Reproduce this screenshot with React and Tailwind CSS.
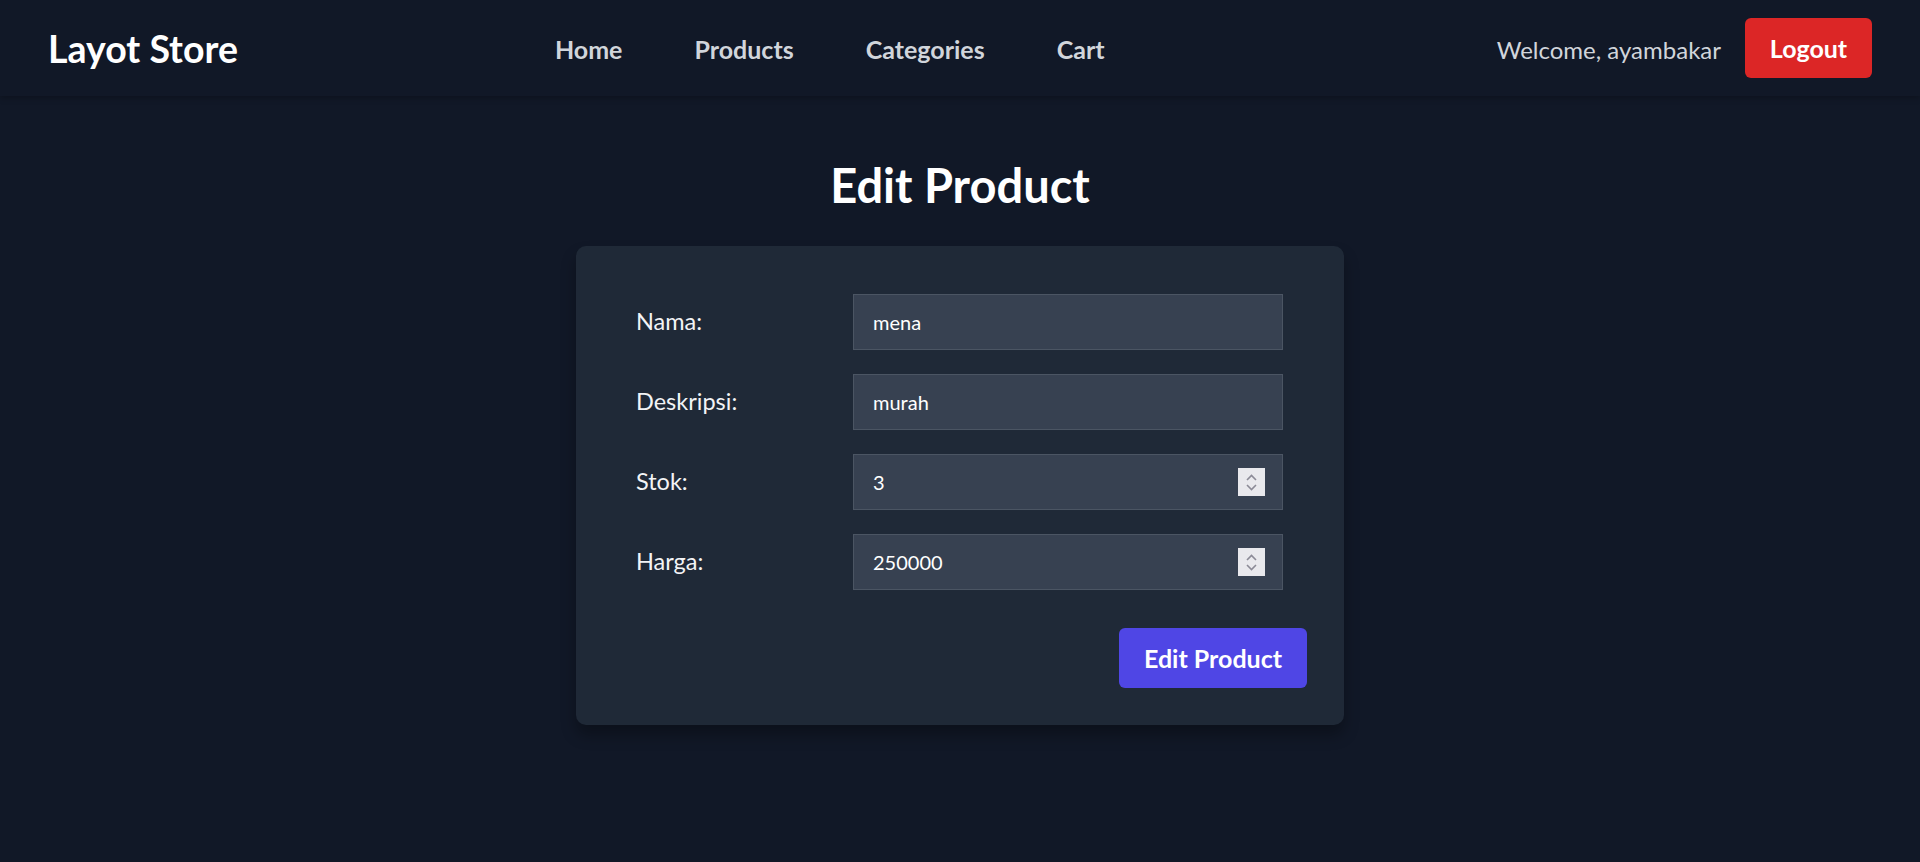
import React from "react";

const font = { fontFamily: "Lato, 'Open Sans', 'Noto Sans', sans-serif" };

function Spinner() {
  return (
    <div className="flex h-[28px] w-[27px] flex-col items-center justify-center gap-[3px] bg-[#e9e9ed]">
      <svg width="11" height="7" viewBox="0 0 11 7" fill="none">
        <path d="M1 6L5.5 1.5L10 6" stroke="#8b8a96" strokeWidth="1.6" />
      </svg>
      <svg width="11" height="7" viewBox="0 0 11 7" fill="none">
        <path d="M1 1L5.5 5.5L10 1" stroke="#8b8a96" strokeWidth="1.6" />
      </svg>
    </div>
  );
}

function Field({ label, value, number }) {
  return (
    <div className="flex items-center">
      <label className="w-[217px] text-[23.5px] text-[#f3f4f6]">{label}</label>
      <div className="flex h-[56px] w-[430px] items-center justify-between border border-[#4b5563] bg-[#374151] pl-[19px] pr-[17px]">
        <span className="text-[20px] text-white">{value}</span>
        {number && <Spinner />}
      </div>
    </div>
  );
}

export default function App() {
  return (
    <div className="min-h-[862px] bg-[#111827]" style={font}>
      <header className="relative flex h-[96px] items-center bg-[#111827] px-[48px] shadow-[0_2px_6px_rgba(0,0,0,0.25)]">
        <div className="text-[37.5px] font-bold leading-[45px] text-white">Layot Store</div>
        <nav className="ml-[317px] flex gap-[72px] pt-[3px] text-[25px] font-bold text-[#d1d5db]">
          <a>Home</a>
          <a>Products</a>
          <a>Categories</a>
          <a>Cart</a>
        </nav>
        <div className="ml-auto flex items-center gap-[24px]">
          <span className="pt-[3px] text-[24px] text-[#d1d5db]">Welcome, ayambakar</span>
          <button className="flex h-[60px] w-[127px] items-center justify-center rounded-[6px] bg-[#dc2626] pt-[2px] text-[25px] font-bold text-white">
            Logout
          </button>
        </div>
      </header>
      <main className="flex flex-col items-center pt-[62px]">
        <h1 className="text-[47px] font-bold leading-[55px] text-white">Edit Product</h1>
        <div className="mt-[33px] w-[768px] rounded-[10px] bg-[#1f2937] px-[37px] pb-[37px] pt-[48px] shadow-[0_10px_15px_rgba(0,0,0,0.3)]">
          <div className="flex flex-col gap-[24px] pl-[23px]">
            <Field label="Nama:" value="mena" />
            <Field label="Deskripsi:" value="murah" />
            <Field label="Stok:" value="3" number />
            <Field label="Harga:" value="250000" number />
          </div>
          <div className="mt-[38px] flex justify-end">
            <button className="flex h-[60px] w-[188px] items-center justify-center rounded-[6px] bg-[#4f46e5] pt-[2px] text-[25px] font-bold text-white">
              Edit Product
            </button>
          </div>
        </div>
      </main>
    </div>
  );
}
